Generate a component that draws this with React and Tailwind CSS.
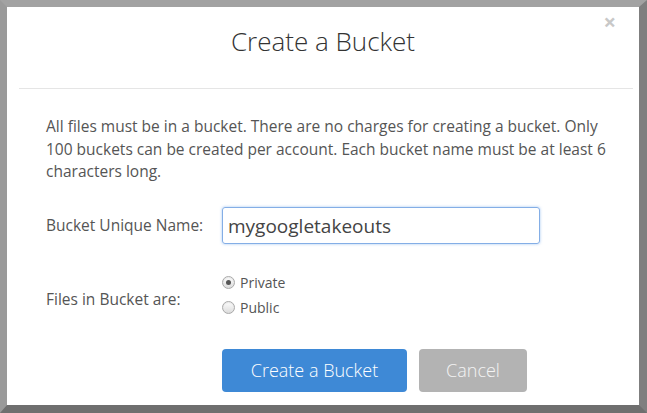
import React, { useState } from 'react';

const Radio = ({ checked, label, onClick }) => (
  <div
    className="flex items-center h-[25px] cursor-pointer"
    onClick={onClick}
  >
    <span className="w-[13px] h-[13px] rounded-full border border-[#a9a9a9] bg-gradient-to-b from-[#fdfdfd] to-[#dcdcdc] flex items-center justify-center shadow-[inset_0_1px_1px_rgba(0,0,0,0.08)]">
      {checked && <span className="w-[5px] h-[5px] rounded-full bg-[#555]"></span>}
    </span>
    <span className="ml-[5px] text-[14px] text-[#555]">{label}</span>
  </div>
);

const App = () => {
  const [name, setName] = useState('mygoogletakeouts');
  const [access, setAccess] = useState('private');

  return (
    <div
      className="w-[647px] h-[413px] border-t-[7px] border-l-[7px] border-r-[8px] border-b-[8px] border-t-[#a2a2a2] border-l-[#9a9a9a] border-r-[#7f7f7f] border-b-[#6f6f6f] bg-white relative"
      style={{ fontFamily: '"Open Sans", "Liberation Sans", sans-serif' }}
    >
      <button className="absolute right-[23px] top-[3px] text-[22px] leading-none font-bold text-[#c8c8c8]">
        ×
      </button>

      {/* header */}
      <div className="pt-[15px] pb-[27px] text-center">
        <h3 className="text-[26px] font-light text-[#333]">Create a Bucket</h3>
      </div>
      <div className="ml-[12px] mr-[6px] h-px bg-[#e5e5e5]"></div>

      {/* body */}
      <div className="pl-[39px] pr-[20px] pt-[26px]">
        <p className="text-[15.5px] leading-[22.5px] text-[#555]">
          All files must be in a bucket. There are no charges for creating a bucket. Only 100 buckets can be created per account. Each bucket name must be at least 6 characters long.
        </p>

        <div className="mt-[24.5px] flex items-center">
          <label className="w-[176px] text-[15.5px] leading-[22.5px] text-[#555]">
            Bucket Unique Name:
          </label>
          <input
            value={name}
            onChange={(e) => setName(e.target.value)}
            className="w-[318px] h-[37px] px-[5px] rounded-[3px] border border-[#84aee6] shadow-[0_0_3px_rgba(102,160,233,0.6)] outline-none text-[19px] text-[#444]"
          />
        </div>

        <div className="mt-[26px] flex items-start">
          <label className="w-[176px] mt-[18px] text-[15.5px] leading-[22.5px] text-[#555]">
            Files in Bucket are:
          </label>
          <div className="flex flex-col">
            <Radio
              label="Private"
              checked={access === 'private'}
              onClick={() => setAccess('private')}
            />
            <Radio
              label="Public"
              checked={access === 'public'}
              onClick={() => setAccess('public')}
            />
          </div>
        </div>

        <div className="mt-[29px] ml-[176px] flex gap-[12px]">
          <button className="w-[185px] h-[43px] rounded-[4px] bg-[#3e89d6] text-white text-[18px] font-light">
            Create a Bucket
          </button>
          <button className="w-[108px] h-[43px] rounded-[4px] bg-[#b3b3b3] text-[#f4f4f4] text-[18px] font-light">
            Cancel
          </button>
        </div>
      </div>
    </div>
  );
};

export default App;
